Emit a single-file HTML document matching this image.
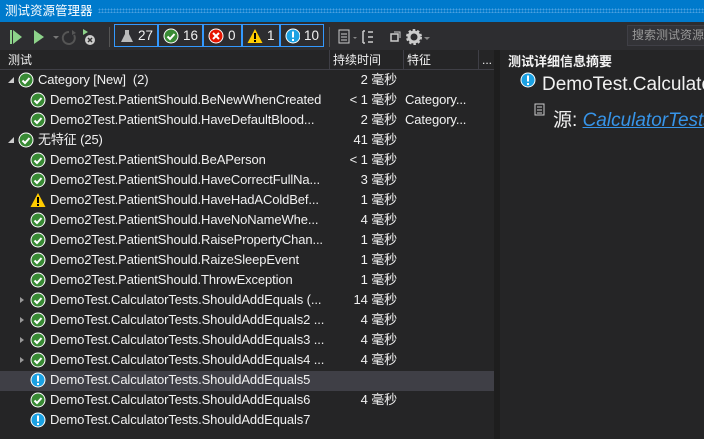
<!DOCTYPE html><html><head><meta charset="utf-8"><style>
*{margin:0;padding:0;box-sizing:border-box}
body{width:704px;height:439px;background:#252526;color:#f1f1f1;font-family:"Liberation Sans","Noto Sans CJK SC",sans-serif;font-size:13px;position:relative;overflow:hidden}
.a{position:absolute;white-space:nowrap}
.title{left:0;top:0;width:704px;height:22px;background:#007acc;color:#fff;font-size:12.5px;line-height:22px;padding-left:5px}
.dots{left:98px;top:8px;width:606px;height:5px;background-image:radial-gradient(#4aa0e0 0.8px,transparent 1px);background-size:3px 3px}
.tb{left:0;top:22px;width:704px;height:28px;background:#2d2d30}
.cnt{top:24px;height:23px;border:1px solid #3399ff;display:flex;align-items:center;gap:4px;padding:0 4px;font-size:13.5px}
.hdr{left:0;top:50px;width:494px;height:20px;background:#252526;border-bottom:1px solid #3f3f46;font-size:12px;line-height:20px}
.sep{top:50px;width:1px;height:20px;background:#3f3f46}
.row{left:0;width:494px;height:20px;line-height:20px;letter-spacing:-0.12px}
.ic{position:absolute;top:2px}
.t{position:absolute}
.d{position:absolute;right:97px}
.f{position:absolute;left:405px}
.exp{position:absolute;left:20px;top:7px;width:0;height:0;border-left:4px solid #999;border-top:3px solid transparent;border-bottom:3px solid transparent}
</style></head><body>
<div class="a title">测试资源管理器</div>
<div class="a dots"></div>
<div class="a tb"></div>
<svg class="a" style="left:8px;top:28px" width="100" height="18">
<path d="M2 2h2v14H2z" fill="#8dd28a"/><path d="M5 2l9 7-9 7z" fill="#8dd28a"/>
<path d="M26 2l10 7-10 7z" fill="#8dd28a"/>
<path d="M45 8h6l-3 3z" fill="#777"/>
<path d="M61 4a6 6 0 1 0 5 3" stroke="#555" stroke-width="2" fill="none"/><path d="M64 2l4 3-4 2z" fill="#555"/>
<path d="M75 1l5 3-5 3z" fill="#8dd28a"/><circle cx="82" cy="12" r="5" fill="#ccc"/><path d="M80 10l4 4M84 10l-4 4" stroke="#333" stroke-width="1.5"/>
</svg>
<div class="a" style="left:109px;top:27px;width:1px;height:20px;background:#555"></div>
<div class="a cnt" style="left:114px;width:44px"><svg width="16" height="16"><path d="M6 2h4v4l4 8H2l4-8z" fill="#bbb"/></svg>27</div>
<div class="a cnt" style="left:158px;width:45px"><svg width="16" height="16"><circle cx="8" cy="8" r="7.5" fill="#fff"/><circle cx="8" cy="8" r="6.5" fill="#388a34"/><path d="M4.5 8.5l2.5 2.5 4.5-5" stroke="#fff" stroke-width="2" fill="none"/></svg>16</div>
<div class="a cnt" style="left:203px;width:39px"><svg width="16" height="16"><circle cx="8" cy="8" r="7.5" fill="#fff"/><circle cx="8" cy="8" r="6.5" fill="#e51400"/><path d="M5 5l6 6M11 5l-6 6" stroke="#fff" stroke-width="2"/></svg>0</div>
<div class="a cnt" style="left:242px;width:38px"><svg width="16" height="16"><path d="M8 1l7.5 14H.5z" fill="#ffcc00"/><path d="M7 5h2v6H7zM7 12h2v2H7z" fill="#000"/></svg>1</div>
<div class="a cnt" style="left:280px;width:44px"><svg width="16" height="16"><circle cx="8" cy="8" r="7.5" fill="#fff"/><circle cx="8" cy="8" r="6.5" fill="#1ba1e2"/><path d="M7 3.5h2v6H7zM7 11h2v2H7z" fill="#fff"/></svg>10</div>
<div class="a" style="left:329px;top:27px;width:1px;height:20px;background:#555"></div>
<svg class="a" style="left:336px;top:27px" width="110" height="20">
<rect x="3" y="3" width="10" height="13" fill="none" stroke="#ccc"/><path d="M5 7h6M5 10h6M5 13h6" stroke="#ccc"/>
<path d="M17 10h4l-2 2z" fill="#888"/>
<path d="M27 4v12M27 4h2M27 16h2M32 5h5M32 10h5M32 15h5" stroke="#ccc" stroke-width="1.5"/>
<rect x="55" y="7" width="7" height="7" fill="none" stroke="#ccc" stroke-width="1.5"/><path d="M58 5h6v6" stroke="#ccc" fill="none"/>
<circle cx="78" cy="10" r="5" fill="none" stroke="#ccc" stroke-width="3"/><circle cx="78" cy="10" r="7" fill="none" stroke="#ccc" stroke-width="2" stroke-dasharray="2.5 2"/>
<path d="M88 10h6l-3 3z" fill="#888"/>
</svg>
<div class="a" style="left:627px;top:25px;width:80px;height:21px;border:1px solid #3f3f46;background:#333337;color:#999;font-size:12px;line-height:19px;padding-left:4px">搜索测试资源</div>

<div class="a hdr"><span class="a" style="left:8px">测试</span><span class="a" style="left:333px">持续时间</span><span class="a" style="left:407px">特征</span><span class="a" style="left:482px">...</span></div>
<div class="a sep" style="left:329px"></div><div class="a sep" style="left:403px"></div><div class="a sep" style="left:478px"></div>
<div class="a" style="left:494px;top:50px;width:6px;height:389px;background:#1e1e1e"></div>

<div class="a" style="left:0;top:371px;width:494px;height:20px;background:#3f3f46"></div>

<div id="rows"></div>
<div class="a" style="left:508px;top:51px;font-weight:bold;font-size:13px">测试详细信息摘要</div>
<svg class="a" style="left:520px;top:72px" width="16" height="16"><circle cx="8" cy="8" r="7.5" fill="#fff"/><circle cx="8" cy="8" r="6.5" fill="#1ba1e2"/><path d="M7 3.5h2v6H7zM7 11h2v2H7z" fill="#fff"/></svg>
<div class="a" style="left:542px;top:74px;font-size:19px">DemoTest.Calculator</div>
<svg class="a" style="left:534px;top:103px" width="12" height="14"><rect x="1" y="1" width="9" height="11" fill="none" stroke="#ccc"/><path d="M3 4h5M3 7h5M3 10h5" stroke="#ccc"/></svg>
<div class="a" style="left:553px;top:105px;font-size:19px">源: <span style="color:#3794e8;text-decoration:underline;font-style:italic">CalculatorTests</span></div>
<script>
var P='<svg width="16" height="16"><circle cx="8" cy="8" r="7.5" fill="#fff"/><circle cx="8" cy="8" r="6.5" fill="#388a34"/><path d="M4.5 8.5l2.5 2.5 4.5-5" stroke="#fff" stroke-width="2" fill="none"/></svg>';
var I='<svg width="16" height="16"><circle cx="8" cy="8" r="7.5" fill="#fff"/><circle cx="8" cy="8" r="6.5" fill="#1ba1e2"/><path d="M7 3.5h2v6H7zM7 11h2v2H7z" fill="#fff"/></svg>';
var W='<svg width="16" height="16"><path d="M8 1l7.5 14H.5z" fill="#ffcc00"/><path d="M7 5h2v6H7zM7 12h2v2H7z" fill="#000"/></svg>';
var R=[
[0,P,'Category [New]&nbsp; (2)','2 毫秒','','g'],
[1,P,'Demo2Test.PatientShould.BeNewWhenCreated','&lt; 1 毫秒','Category...'],
[1,P,'Demo2Test.PatientShould.HaveDefaultBlood...','2 毫秒','Category...'],
[0,P,'无特征 (25)','41 毫秒','','g'],
[1,P,'Demo2Test.PatientShould.BeAPerson','&lt; 1 毫秒',''],
[1,P,'Demo2Test.PatientShould.HaveCorrectFullNa...','3 毫秒',''],
[1,W,'Demo2Test.PatientShould.HaveHadAColdBef...','1 毫秒',''],
[1,P,'Demo2Test.PatientShould.HaveNoNameWhe...','4 毫秒',''],
[1,P,'Demo2Test.PatientShould.RaisePropertyChan...','1 毫秒',''],
[1,P,'Demo2Test.PatientShould.RaizeSleepEvent','1 毫秒',''],
[1,P,'Demo2Test.PatientShould.ThrowException','1 毫秒',''],
[1,P,'DemoTest.CalculatorTests.ShouldAddEquals (...','14 毫秒','','e'],
[1,P,'DemoTest.CalculatorTests.ShouldAddEquals2 ...','4 毫秒','','e'],
[1,P,'DemoTest.CalculatorTests.ShouldAddEquals3 ...','4 毫秒','','e'],
[1,P,'DemoTest.CalculatorTests.ShouldAddEquals4 ...','4 毫秒','','e'],
[1,I,'DemoTest.CalculatorTests.ShouldAddEquals5','',''],
[1,P,'DemoTest.CalculatorTests.ShouldAddEquals6','4 毫秒',''],
[1,I,'DemoTest.CalculatorTests.ShouldAddEquals7','','']];
var h='';R.forEach(function(r,i){var y=70+i*20,l=r[0]?30:18;
h+='<div class="a row" style="top:'+y+'px">'+(r[5]=='g'?'<svg class="ic" style="left:7px;top:6px" width="8" height="8"><path d="M7 1v6H1z" fill="#ccc"/></svg>':'')+(r[5]=='e'?'<div class="exp"></div>':'')+'<span class="ic" style="left:'+l+'px">'+r[1]+'</span><span class="t" style="left:'+(l+20)+'px">'+r[2]+'</span><span class="d">'+r[3]+'</span><span class="f">'+r[4]+'</span></div>';});
document.getElementById('rows').innerHTML=h;
</script>
</body></html>
